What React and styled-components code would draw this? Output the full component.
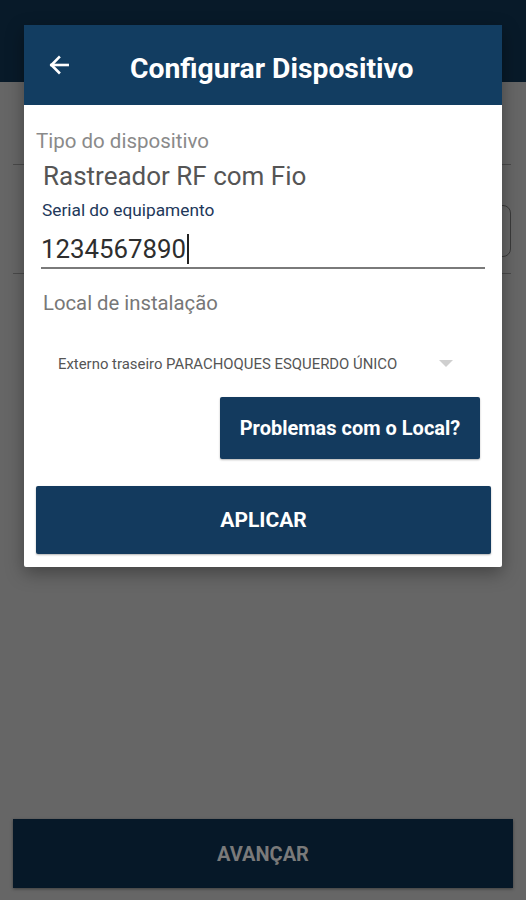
import React from "react";
import styled, { createGlobalStyle } from "styled-components";

const Global = createGlobalStyle`
  html, body { margin: 0; padding: 0; }
  body { background: #666666; font-family: Roboto, "Liberation Sans", sans-serif; }
  #root { height: 900px; }
`;

const Screen = styled.div`
  position: relative;
  width: 526px;
  height: 900px;
  background: #666666;
  overflow: hidden;
  display: flex;
  flex-direction: column;
`;

const AppBar = styled.div`
  height: 82px;
  background: #081a29;
  flex: none;
`;

const BgContent = styled.div`
  flex: 1;
  display: flex;
  flex-direction: column;
  padding: 0 15px 12px 13px;
`;

const BgLine = styled.div`
  height: 1px;
  background: #4a4a4a;
  margin-top: ${(p) => p.$mt}px;
`;

const BgField = styled.div`
  margin-top: 40px;
  margin-left: auto;
  width: 80px;
  height: 50px;
  border: 1px solid #3a3a3a;
  border-radius: 8px;
`;

const Spacer = styled.div`
  flex: 1;
`;

const BottomButton = styled.div`
  height: 69px;
  margin-right: -2px;
  background: #061828;
  color: #7a7a7a;
  font-weight: 700;
  font-size: 20px;
  display: flex;
  align-items: center;
  justify-content: center;
  box-shadow: 0 1px 3px rgba(0,0,0,0.4);
`;

const Dialog = styled.div`
  position: absolute;
  left: 24px;
  top: 25px;
  width: 478px;
  background: #ffffff;
  border-radius: 2px;
  box-shadow: 0 6px 18px rgba(0,0,0,0.35);
  display: flex;
  flex-direction: column;
`;

const DialogHeader = styled.div`
  height: 80px;
  background: #123d61;
  display: flex;
  align-items: center;
  padding: 0 0 0 22px;
  color: #ffffff;
`;

const Title = styled.div`
  font-family: Roboto, "Liberation Sans", sans-serif;
  font-weight: 700;
  font-size: 28.3px;
  margin-left: 58px;
  margin-top: 6px;
`;

const Body = styled.div`
  padding: 24px 11px 13px 12px;
  display: flex;
  flex-direction: column;
`;

const Label = styled.div`
  font-size: ${(p) => p.$size}px;
  line-height: ${(p) => p.$lh}px;
  color: ${(p) => p.$color};
  margin-left: ${(p) => p.$ml || 0}px;
  margin-top: ${(p) => p.$mt || 0}px;
`;

const InputRow = styled.div`
  margin: 14px 6px 0 5px;
  border-bottom: 2px solid #7a7a7a;
  padding-bottom: 3px;
  display: flex;
  align-items: center;
`;

const InputText = styled.span`
  font-size: 25.8px;
  line-height: 30px;
  color: #2e2e2e;
`;

const Caret = styled.span`
  display: inline-block;
  width: 2px;
  height: 30px;
  background: #222;
  margin-left: 1px;
`;

const SelectRow = styled.div`
  display: flex;
  align-items: center;
  justify-content: space-between;
  margin: 40px 0 0 22px;
  padding-right: 38px;
  height: 18px;
`;

const SelectText = styled.span`
  font-size: 14.9px;
  line-height: 18px;
  color: #555;
`;

const Actions = styled.div`
  display: flex;
  justify-content: flex-end;
  margin-top: 24px;
  padding-right: 11px;
`;

const Button = styled.div`
  background: #133a5e;
  color: #fff;
  font-weight: 700;
  font-size: ${(p) => p.$size}px;
  height: ${(p) => p.$h}px;
  width: ${(p) => (p.$w ? p.$w + "px" : "auto")};
  border-radius: 2px;
  display: flex;
  align-items: center;
  justify-content: center;
  box-shadow: 0 1px 2px rgba(0,0,0,0.3);
  margin-top: ${(p) => p.$mt || 0}px;
`;

const Arrow = () => (
  <svg width="26" height="26" viewBox="0 0 24 24" fill="none" stroke="#fff" strokeWidth="2.4" strokeLinecap="square">
    <path d="M20 12H5" />
    <path d="M12 5l-7 7 7 7" />
  </svg>
);

const Caretdown = () => (
  <svg width="14" height="8" viewBox="0 0 14 8">
    <path d="M0 0h14L7 7z" fill="#cfcfcf" />
  </svg>
);

export default function App() {
  return (
    <>
      <Global />
      <Screen>
        <AppBar />
        <BgContent>
          <BgLine $mt={82} />
          <BgField />
          <BgLine $mt={16} />
          <Spacer />
          <BottomButton>AVANÇAR</BottomButton>
        </BgContent>
        <Dialog>
          <DialogHeader>
            <Arrow />
            <Title>Configurar Dispositivo</Title>
          </DialogHeader>
          <Body>
            <Label $size={20.5} $lh={24} $color="#8a8a8a">Tipo do dispositivo</Label>
            <Label $size={26} $lh={30} $color="#555" $ml={7} $mt={8}>Rastreador RF com Fio</Label>
            <Label $size={17.3} $lh={20} $color="#22385a" $ml={6} $mt={9}>Serial do equipamento</Label>
            <InputRow>
              <InputText>1234567890</InputText>
              <Caret />
            </InputRow>
            <Label $size={20.3} $lh={24} $color="#777" $ml={7} $mt={22}>Local de instalação</Label>
            <SelectRow>
              <SelectText>Externo traseiro PARACHOQUES ESQUERDO ÚNICO</SelectText>
              <Caretdown />
            </SelectRow>
            <Actions>
              <Button $size={20} $h={62} $w={260}>Problemas com o Local?</Button>
            </Actions>
            <Button $size={21} $h={68} $mt={27}>APLICAR</Button>
          </Body>
        </Dialog>
      </Screen>
    </>
  );
}
